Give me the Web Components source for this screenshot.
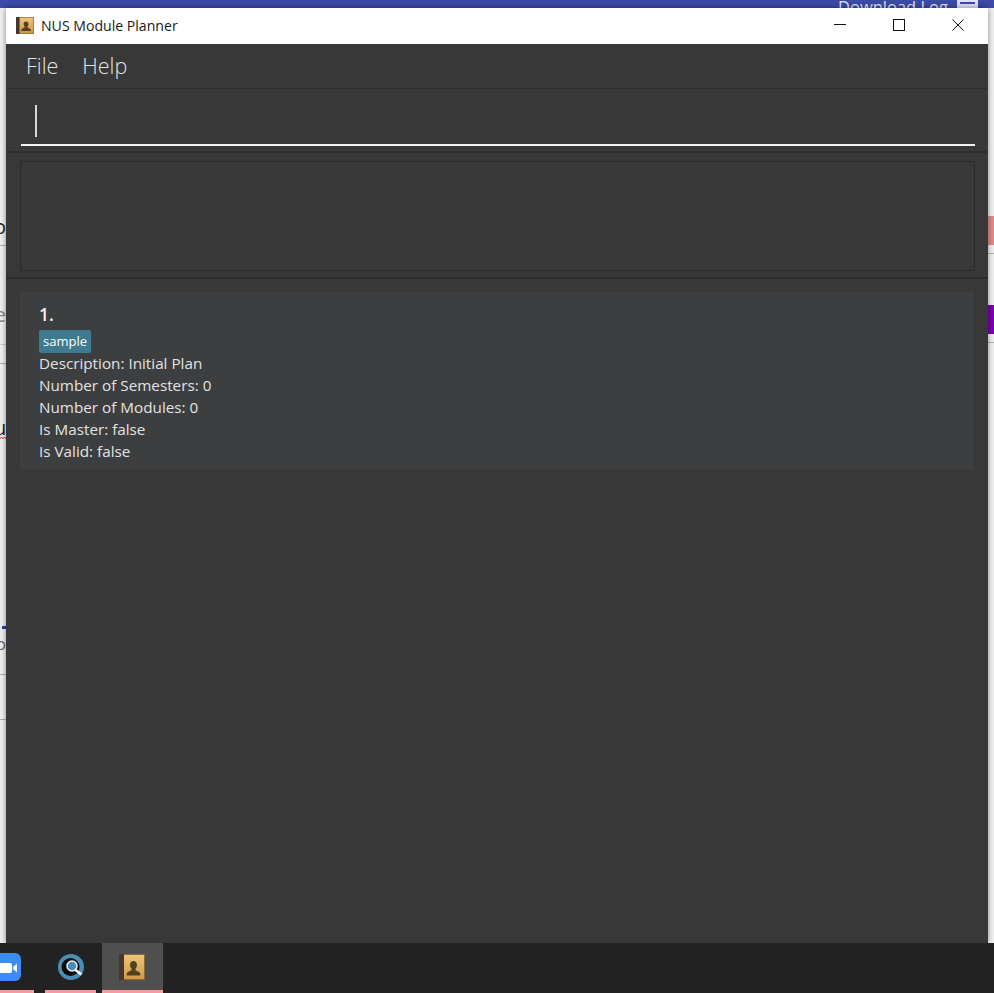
<!DOCTYPE html>
<html>
<head>
<meta charset="utf-8">
<title>NUS Module Planner</title>
<style>
html, body { margin: 0; padding: 0; height: 100%; overflow: hidden; }
body { background: #f1f1f1; font-family: "Open Sans", "Liberation Sans", sans-serif; }
</style>
</head>
<body>
<desk-top>
  <app-window title="NUS Module Planner">
    <menu-bar><menu-item>File</menu-item><menu-item>Help</menu-item></menu-bar>
    <command-box></command-box>
    <result-box></result-box>
    <plan-list>
      <plan-card index="1." tag="sample">
        <div>Description: Initial Plan</div>
        <div>Number of Semesters: 0</div>
        <div>Number of Modules: 0</div>
        <div>Is Master: false</div>
        <div>Is Valid: false</div>
      </plan-card>
    </plan-list>
  </app-window>
  <task-bar></task-bar>
</desk-top>

<script>
const BOOK_ICON = `
  <defs><linearGradient id="cover" x1="0" y1="0" x2="0" y2="1">
    <stop offset="0" stop-color="#eec479"/><stop offset="1" stop-color="#cf9a48"/>
  </linearGradient></defs>
  <rect x="0" y="0" width="26" height="26" fill="#8a6a3a"/>
  <rect x="5" y="1" width="20" height="24" fill="url(#cover)"/>
  <rect x="0" y="0" width="5" height="26" fill="#45372f"/>
  <path d="M14.500 7c2.200 0 3.500 1.800 3.500 4 0 1.500-.6 2.800-1.500 3.600v1.600c1 .8 4.200 1.200 4.800 3v2.300H7.700v-2.300c.6-1.800 3.800-2.200 4.800-3v-1.600c-.9-.8-1.500-2.100-1.500-3.600 0-2.200 1.300-4 3.500-4z" fill="#54411f"/>`;

class DeskTop extends HTMLElement {
  constructor() {
    super();
    this.attachShadow({mode: 'open'});
    this.shadowRoot.innerHTML = `<style>
      :host { display: block; position: relative; width: 994px; height: 993px; overflow: hidden; background: #f1f1f1; color: #333; }
      .top { position: absolute; left: 0; top: 0; width: 100%; height: 8px; background: #3b4ba6; }
      .top span { position: absolute; left: 838px; top: 0; font-size: 16.500px; line-height: 14px; color: #e2e5f4; white-space: nowrap; }
      .top i { position: absolute; left: 957px; top: 0; width: 21px; height: 8px; background: #dfe3f5; }
      .top i::after { content: ""; position: absolute; left: 3px; right: 3px; top: 2px; height: 2px; background: #3b4ba6; }
      .bit { position: absolute; }
      .line { position: absolute; height: 1px; background: #b4b4b4; }
      .frag { position: absolute; left: -6px; width: 12px; font-size: 20px; line-height: 24px; text-align: right; }
      svg.bit { display: block; }
    </style>
    <div class="top"><span>Download Log</span><i></i></div>
    <div class="bit" style="left:988px;top:216px;width:6px;height:29px;background:#e08a8a"></div>
    <div class="bit" style="left:988px;top:305px;width:6px;height:29px;background:#7b00b0"></div>
    <div class="line" style="left:988px;top:253px;width:6px"></div>
    <div class="line" style="left:988px;top:342px;width:6px"></div>
    <div class="line" style="left:0;top:245px;width:6px"></div>
    <div class="line" style="left:0;top:344px;width:6px;background:#cfcfcf"></div>
    <div class="line" style="left:0;top:363px;width:6px"></div>
    <div class="line" style="left:0;top:674px;width:6px"></div>
    <div class="line" style="left:0;top:719px;width:6px"></div>
    <div class="bit" style="left:2px;top:626px;width:4px;height:3px;background:#2b3fa8"></div>
    <div class="frag" style="top:215px;color:#222">o</div>
    <div class="frag" style="top:303px;color:#888">e</div>
    <div class="frag" style="top:416px;color:#222">u</div>
    <div class="frag" style="top:632px;color:#666;font-size:17px">o</div>
    <svg class="bit" style="left:0;top:436px" width="6" height="4" viewBox="0 0 6 4"><path d="M0 2.500l1.500-1 1.500 1 1.500-1 1.500 1" stroke="#d92020" fill="none"/></svg>
    <slot></slot>`;
  }
}

class AppWindow extends HTMLElement {
  constructor() {
    super();
    this.attachShadow({mode: 'open'});
    this.shadowRoot.innerHTML = `<style>
      :host { display: flex; flex-direction: column; position: absolute; left: 6px; top: 8px; width: 982px; height: 935px; background: #383838; box-shadow: 0 0 6px rgba(0,0,0,.45); }
      header { display: flex; align-items: center; height: 36px; box-sizing: border-box; padding: 0 1px 2px 0; flex: none; background: #fff; color: #1a1a1a; font-size: 14.100px; }
      header svg.logo { margin-left: 10px; margin-right: 7px; flex: none; }
      .ttl { flex: 1; white-space: nowrap; }
      .ctl { width: 59px; display: flex; align-items: center; justify-content: center; }
      .ctl svg { display: block; }
    </style>
    <header>
      <svg class="logo" width="18" height="17" viewBox="0 0 26 26" preserveAspectRatio="none">${BOOK_ICON}</svg>
      <span class="ttl"></span>
      <div class="ctl"><svg width="12" height="12" viewBox="0 0 12 12"><path d="M0 5.500h12" stroke="#111" fill="none"/></svg></div>
      <div class="ctl"><svg width="12" height="12" viewBox="0 0 12 12"><rect x=".5" y=".5" width="11" height="11" stroke="#111" fill="none"/></svg></div>
      <div class="ctl"><svg width="12" height="12" viewBox="0 0 12 12"><path d="M.5.5l11 11M11.500.5l-11 11" stroke="#111" fill="none"/></svg></div>
    </header>
    <slot></slot>`;
    this.shadowRoot.querySelector('.ttl').textContent = this.getAttribute('title');
  }
}

class MenuBar extends HTMLElement {
  constructor() {
    super();
    this.attachShadow({mode: 'open'});
    this.shadowRoot.innerHTML = `<style>
      :host { display: flex; align-items: center; gap: 24px; height: 44px; padding-left: 20px; border-bottom: 1px solid #2e2e2e; flex: none; }
    </style><slot></slot>`;
  }
}

class MenuItem extends HTMLElement {
  constructor() {
    super();
    this.attachShadow({mode: 'open'});
    this.shadowRoot.innerHTML = `<style>
      :host { display: block; color: #e4e4e4; font-size: 21.500px; font-weight: 300; line-height: 30px; }
    </style><slot></slot>`;
  }
}

class CommandBox extends HTMLElement {
  constructor() {
    super();
    this.attachShadow({mode: 'open'});
    this.shadowRoot.innerHTML = `<style>
      :host { display: block; height: 64px; padding: 0 13px 0 15px; box-sizing: border-box; border-bottom: 2px solid #2e2e2e; flex: none; }
      .field { height: 57px; border-bottom: 2px solid #f2f2f2; box-sizing: border-box; padding: 16px 0 0 14px; }
      .caret { width: 2px; height: 32px; background: #d8d8d8; }
    </style><div class="field"><div class="caret"></div></div>`;
  }
}

class ResultBox extends HTMLElement {
  constructor() {
    super();
    this.attachShadow({mode: 'open'});
    this.shadowRoot.innerHTML = `<style>
      :host { display: block; height: 126px; padding: 8px 13px 0 14px; box-sizing: border-box; border-bottom: 2px solid #2e2e2e; flex: none; }
      div { height: 110px; box-sizing: border-box; border: 1px solid #2b2b2b; }
    </style><div></div>`;
  }
}

class PlanList extends HTMLElement {
  constructor() {
    super();
    this.attachShadow({mode: 'open'});
    this.shadowRoot.innerHTML = `<style>
      :host { display: block; flex: 1; padding: 13px 14px 0 14px; }
    </style><slot></slot>`;
  }
}

class PlanCard extends HTMLElement {
  constructor() {
    super();
    this.attachShadow({mode: 'open'});
    this.shadowRoot.innerHTML = `<style>
      :host { display: block; height: 178px; box-sizing: border-box; background: #3c3e40; padding: 10px 19px 0; color: #e2e2e2; font-size: 15.250px; line-height: 22px; }
      .idx { color: #f4f4f4; font-size: 17.500px; font-weight: 600; line-height: 24px; }
      .tag { display: inline-block; background: #3e7b91; color: #fff; font-size: 13px; line-height: 23px; height: 23px; padding: 0 4px; border-radius: 2px; margin: 4px 0 0; vertical-align: top; }
      .tags { height: 26px; }
    </style>
    <div class="idx"></div>
    <div class="tags"><span class="tag"></span></div>
    <slot></slot>`;
    this.shadowRoot.querySelector('.idx').textContent = this.getAttribute('index');
    this.shadowRoot.querySelector('.tag').textContent = this.getAttribute('tag');
  }
}

class TaskBar extends HTMLElement {
  constructor() {
    super();
    this.attachShadow({mode: 'open'});
    this.shadowRoot.innerHTML = `<style>
      :host { display: flex; position: absolute; left: 0; top: 943px; width: 994px; height: 50px; background: #222; }
      .app { position: relative; flex: none; display: flex; align-items: center; justify-content: center; height: 50px; box-sizing: border-box; padding-bottom: 2px; }
      .app::after { content: ""; position: absolute; left: 0; right: 0; bottom: 0; height: 3px; background: #fb9aa0; }
      .zoom { width: 34px; justify-content: flex-start; overflow: hidden; }
      .search { width: 51px; margin-left: 11px; }
      .book { width: 61px; margin-left: 6px; background: #4f4f4f; padding-right: 1px; }
    </style>
    <div class="app zoom"><svg width="22" height="28" viewBox="0 0 22 28" style="flex:none;display:block">
      <path d="M0 0h15a6 6 0 0 1 6 6v16a6 6 0 0 1-6 6H0z" fill="#3d8bf6"/>
      <path d="M0 10h10a2 2 0 0 1 2 2v6a2 2 0 0 1-2 2H0z" fill="#fff"/><path d="M13 14l4-3.500v9l-4-3.500z" fill="#fff"/></svg></div>
    <div class="app search"><svg width="26" height="26" viewBox="0 0 26 26">
      <circle cx="13" cy="13" r="13" fill="#4d8db5"/><circle cx="12.500" cy="13" r="9" fill="#0b0b0b"/>
      <circle cx="14" cy="12" r="5" fill="#4d8db5" stroke="#eef4f8" stroke-width="1.500"/>
      <path d="M17.500 16l6 4.500" stroke="#fff" stroke-width="2.500"/></svg></div>
    <div class="app book"><svg width="26" height="26" viewBox="0 0 26 26">${BOOK_ICON}</svg></div>`;
  }
}

customElements.define('desk-top', DeskTop);
customElements.define('app-window', AppWindow);
customElements.define('menu-bar', MenuBar);
customElements.define('menu-item', MenuItem);
customElements.define('command-box', CommandBox);
customElements.define('result-box', ResultBox);
customElements.define('plan-list', PlanList);
customElements.define('plan-card', PlanCard);
customElements.define('task-bar', TaskBar);
</script>
</body>
</html>
